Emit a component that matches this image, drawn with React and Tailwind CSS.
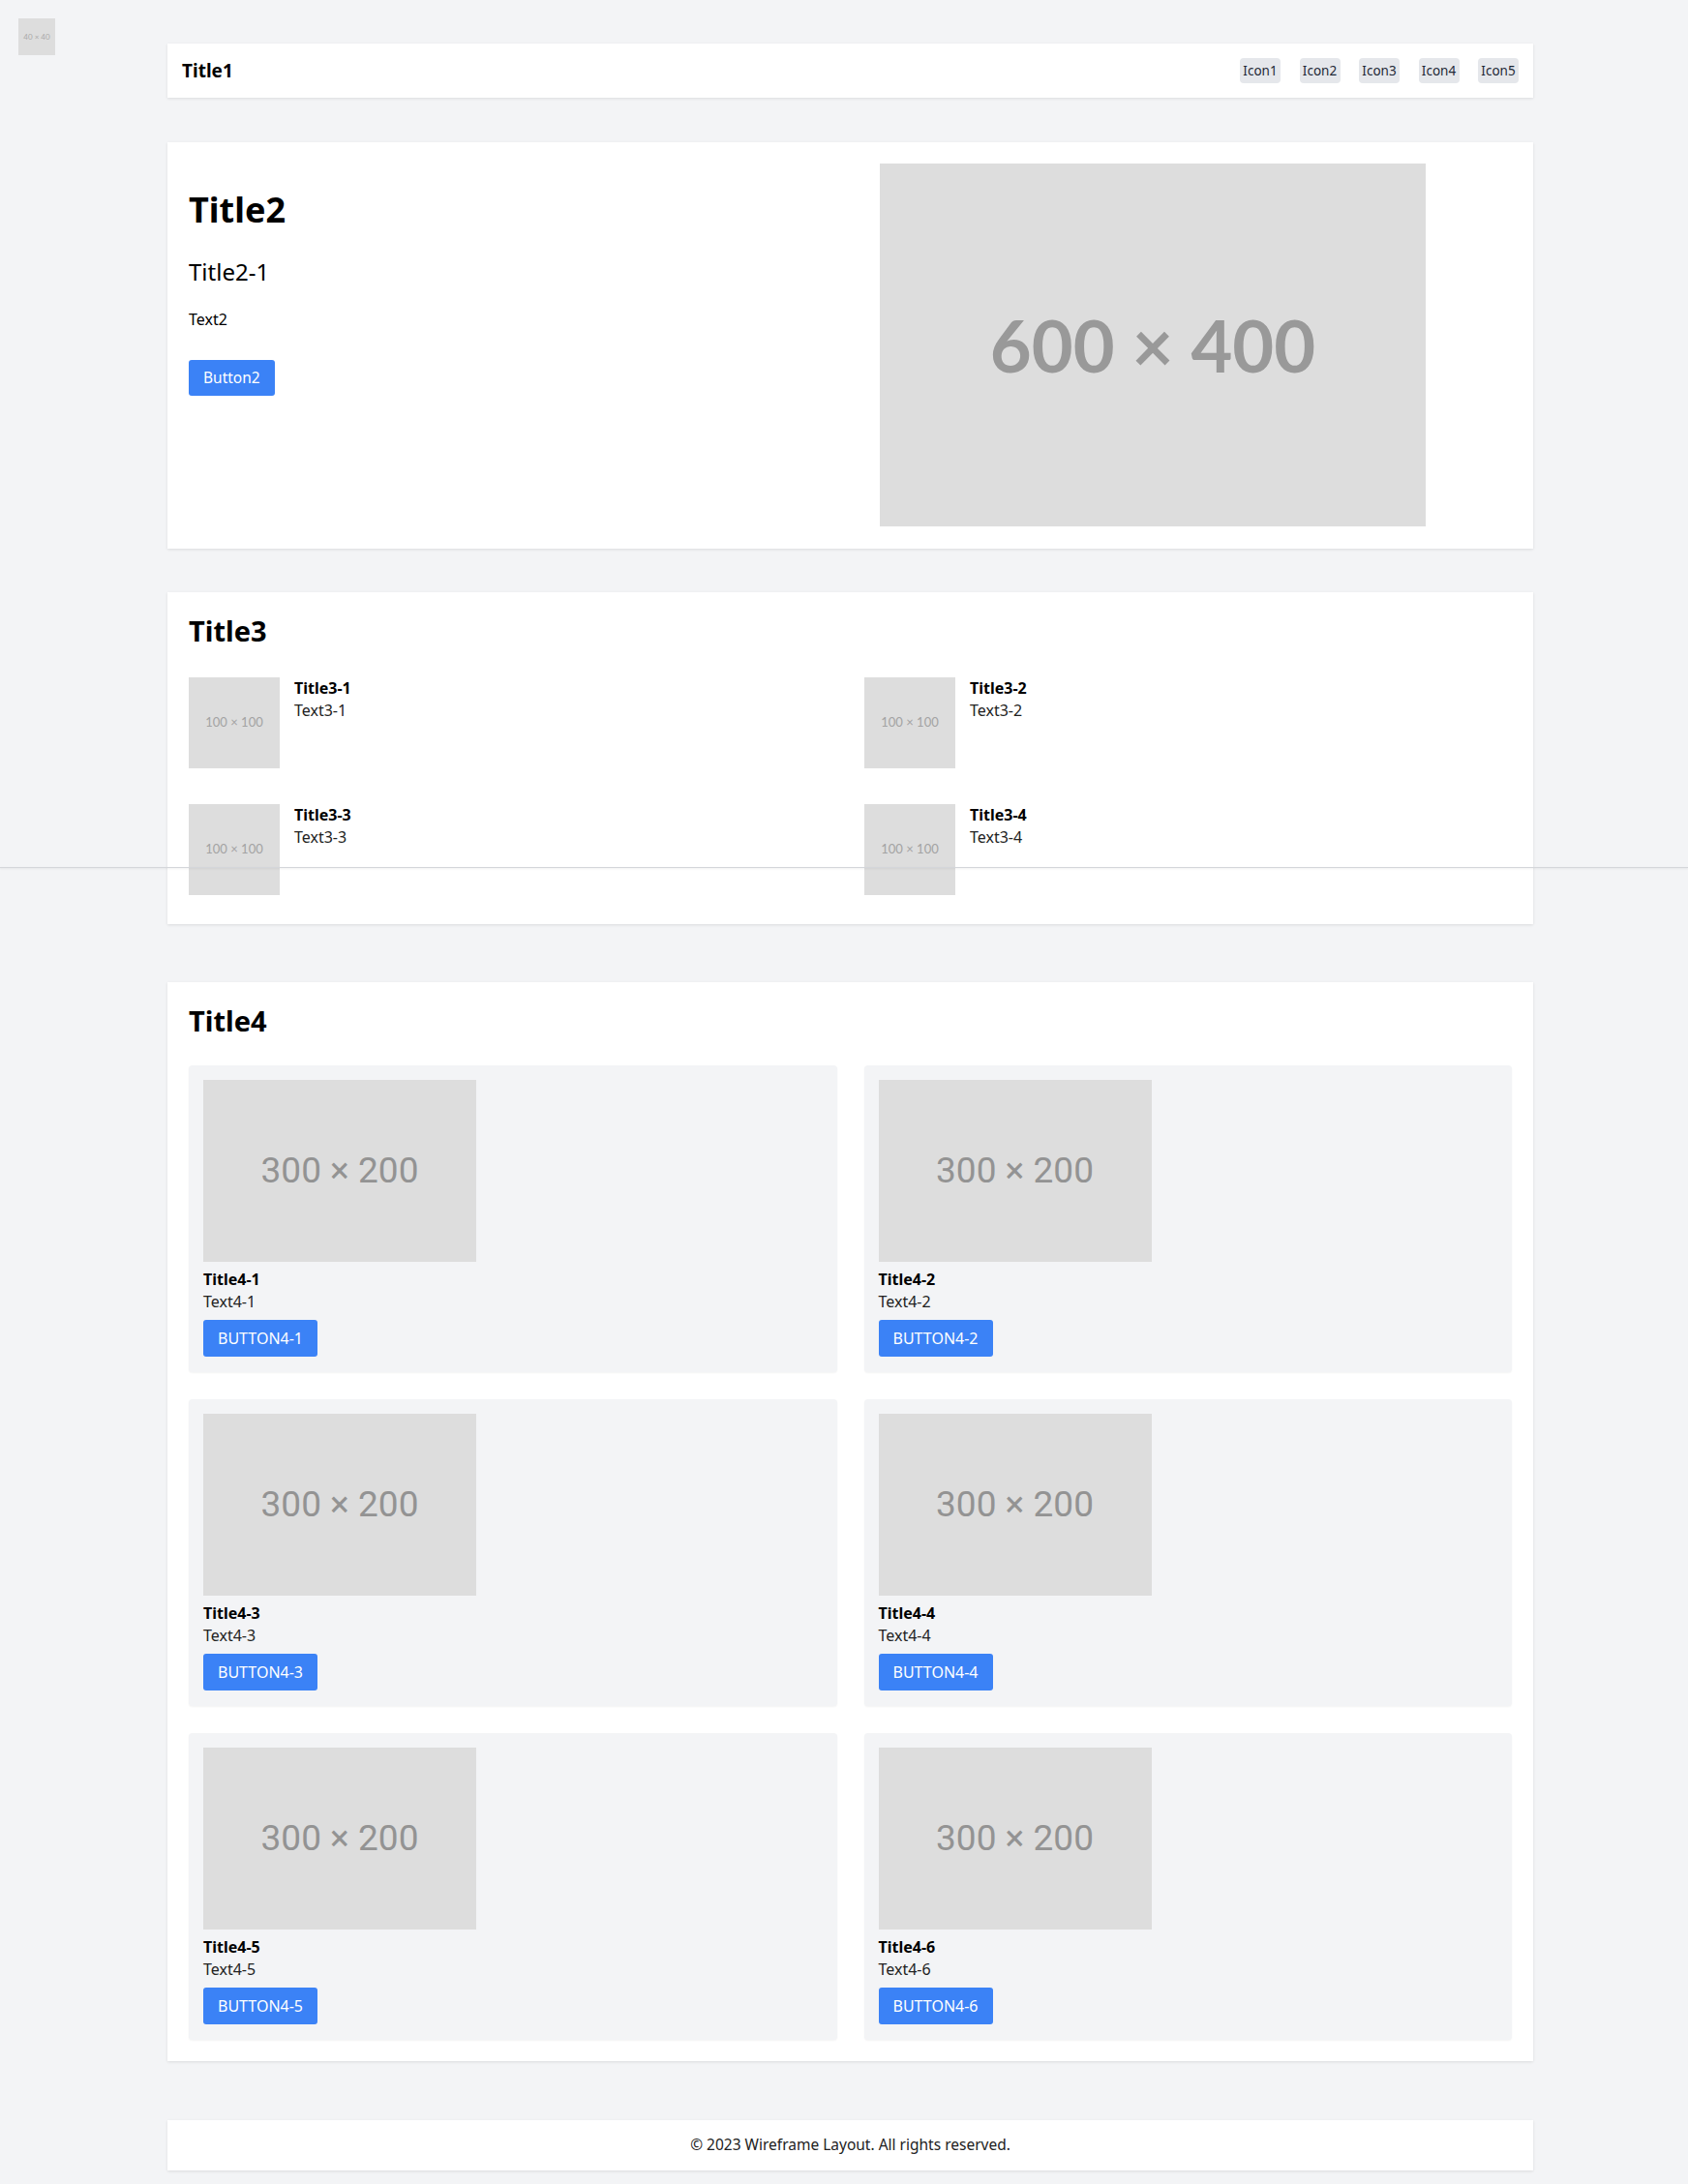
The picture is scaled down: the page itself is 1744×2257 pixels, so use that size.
import React from 'react';

const Placeholder = ({ label, className = '', textClass = '' }) => (
  <div className={`flex items-center justify-center bg-[#dddddd] shrink-0 ${className}`}>
    <span className={`whitespace-nowrap ${textClass}`}>{label}</span>
  </div>
);

const features = [
  { title: 'Title3-1', text: 'Text3-1' },
  { title: 'Title3-2', text: 'Text3-2' },
  { title: 'Title3-3', text: 'Text3-3' },
  { title: 'Title3-4', text: 'Text3-4' },
];

const cards = [1, 2, 3, 4, 5, 6];

export default function App() {
  return (
    <div className="relative min-h-screen bg-[#f3f4f6] pt-[45px] pb-[14px] font-['Noto_Sans',sans-serif] text-black">
      {/* logo */}
      <div className="absolute left-[19px] top-[19px] w-[38px] h-[38px] bg-[#dddddd] flex items-center justify-center">
        <span className="text-[8px] text-[#aaaaaa] font-['Lato',sans-serif]">40 × 40</span>
      </div>

      {/* fold line from the stitched capture */}
      <div className="absolute left-0 right-0 top-[896px] h-px bg-[#d4d6da] shadow-[0_1px_2px_rgba(0,0,0,0.08)] z-10" />

      <div className="ml-[173px] w-[1411px] flex flex-col">
        {/* header */}
        <header className="h-[56px] bg-white shadow-[0_1px_3px_rgba(0,0,0,0.1)] flex items-center justify-between px-[15px]">
          <h1 className="text-[19px] font-bold">Title1</h1>
          <div className="flex gap-[19.5px]">
            {['Icon1', 'Icon2', 'Icon3', 'Icon4', 'Icon5'].map((i) => (
              <span key={i} className="w-[42px] h-[26px] flex items-center justify-center bg-[#e5e7eb] rounded-[4px] text-[13.5px] text-[#1f2937]">
                {i}
              </span>
            ))}
          </div>
        </header>

        {/* hero */}
        <section className="mt-[46px] bg-white shadow-[0_1px_3px_rgba(0,0,0,0.1)] pt-[22px] pb-[23px] px-[22px] flex">
          <div className="w-[714px] pt-[24px]">
            <h2 className="text-[36px] font-bold leading-[48px]">Title2</h2>
            <h3 className="mt-[24px] text-[24px] leading-[32px]">Title2-1</h3>
            <p className="mt-[21px] text-[16px] leading-[24px]">Text2</p>
            <button className="mt-[30px] h-[37px] px-[15px] bg-[#3b82f6] text-white text-[15.5px] rounded-[3px]">Button2</button>
          </div>
          <Placeholder label="600 × 400" className="w-[564px] h-[375px]" textClass="font-['Lato',sans-serif] font-bold text-[74px] text-[#999999]" />
        </section>

        {/* features */}
        <section className="mt-[45px] bg-white shadow-[0_1px_3px_rgba(0,0,0,0.1)] px-[22px] pt-[20px] pb-[30px]">
          <h2 className="text-[29px] font-bold leading-[40px]">Title3</h2>
          <div className="mt-[28px] grid grid-cols-2 gap-x-[29px] gap-y-[37px]">
            {features.map((f) => (
              <div key={f.title} className="flex gap-[15px]">
                <Placeholder label="100 × 100" className="w-[94px] h-[94px]" textClass="font-['Lato',sans-serif] text-[13px] text-[#a3a3a3]" />
                <div>
                  <h4 className="text-[16px] font-bold leading-[23px]">{f.title}</h4>
                  <p className="text-[16px] leading-[23px] text-[#222222]">{f.text}</p>
                </div>
              </div>
            ))}
          </div>
        </section>

        {/* cards */}
        <section className="mt-[60px] bg-white shadow-[0_1px_3px_rgba(0,0,0,0.1)] px-[22px] pt-[20px] pb-[22px]">
          <h2 className="text-[29px] font-bold leading-[40px]">Title4</h2>
          <div className="mt-[26px] grid grid-cols-2 gap-x-[28px] gap-y-[28px]">
            {cards.map((n) => (
              <div key={n} className="bg-[#f3f4f6] rounded-[4px] shadow-[0_1px_2px_rgba(0,0,0,0.05)] p-[15px] pb-[16px] flex flex-col items-start">
                <Placeholder label="300 × 200" className="w-[282px] h-[188px]" textClass="font-['Roboto',sans-serif] text-[37px] text-[#939393]" />
                <h4 className="mt-[7px] text-[16px] font-bold leading-[23px]">Title4-{n}</h4>
                <p className="text-[16px] leading-[23px] text-[#222222]">Text4-{n}</p>
                <button className="mt-[7px] h-[38px] px-[15px] bg-[#3b82f6] text-white text-[16px] rounded-[3px]">BUTTON4-{n}</button>
              </div>
            ))}
          </div>
        </section>

        {/* footer */}
        <footer className="mt-[61px] h-[52px] bg-white shadow-[0_1px_3px_rgba(0,0,0,0.1)] flex items-center justify-center">
          <p className="text-[15.5px] text-[#222222]">© 2023 Wireframe Layout. All rights reserved.</p>
        </footer>
      </div>
    </div>
  );
}
